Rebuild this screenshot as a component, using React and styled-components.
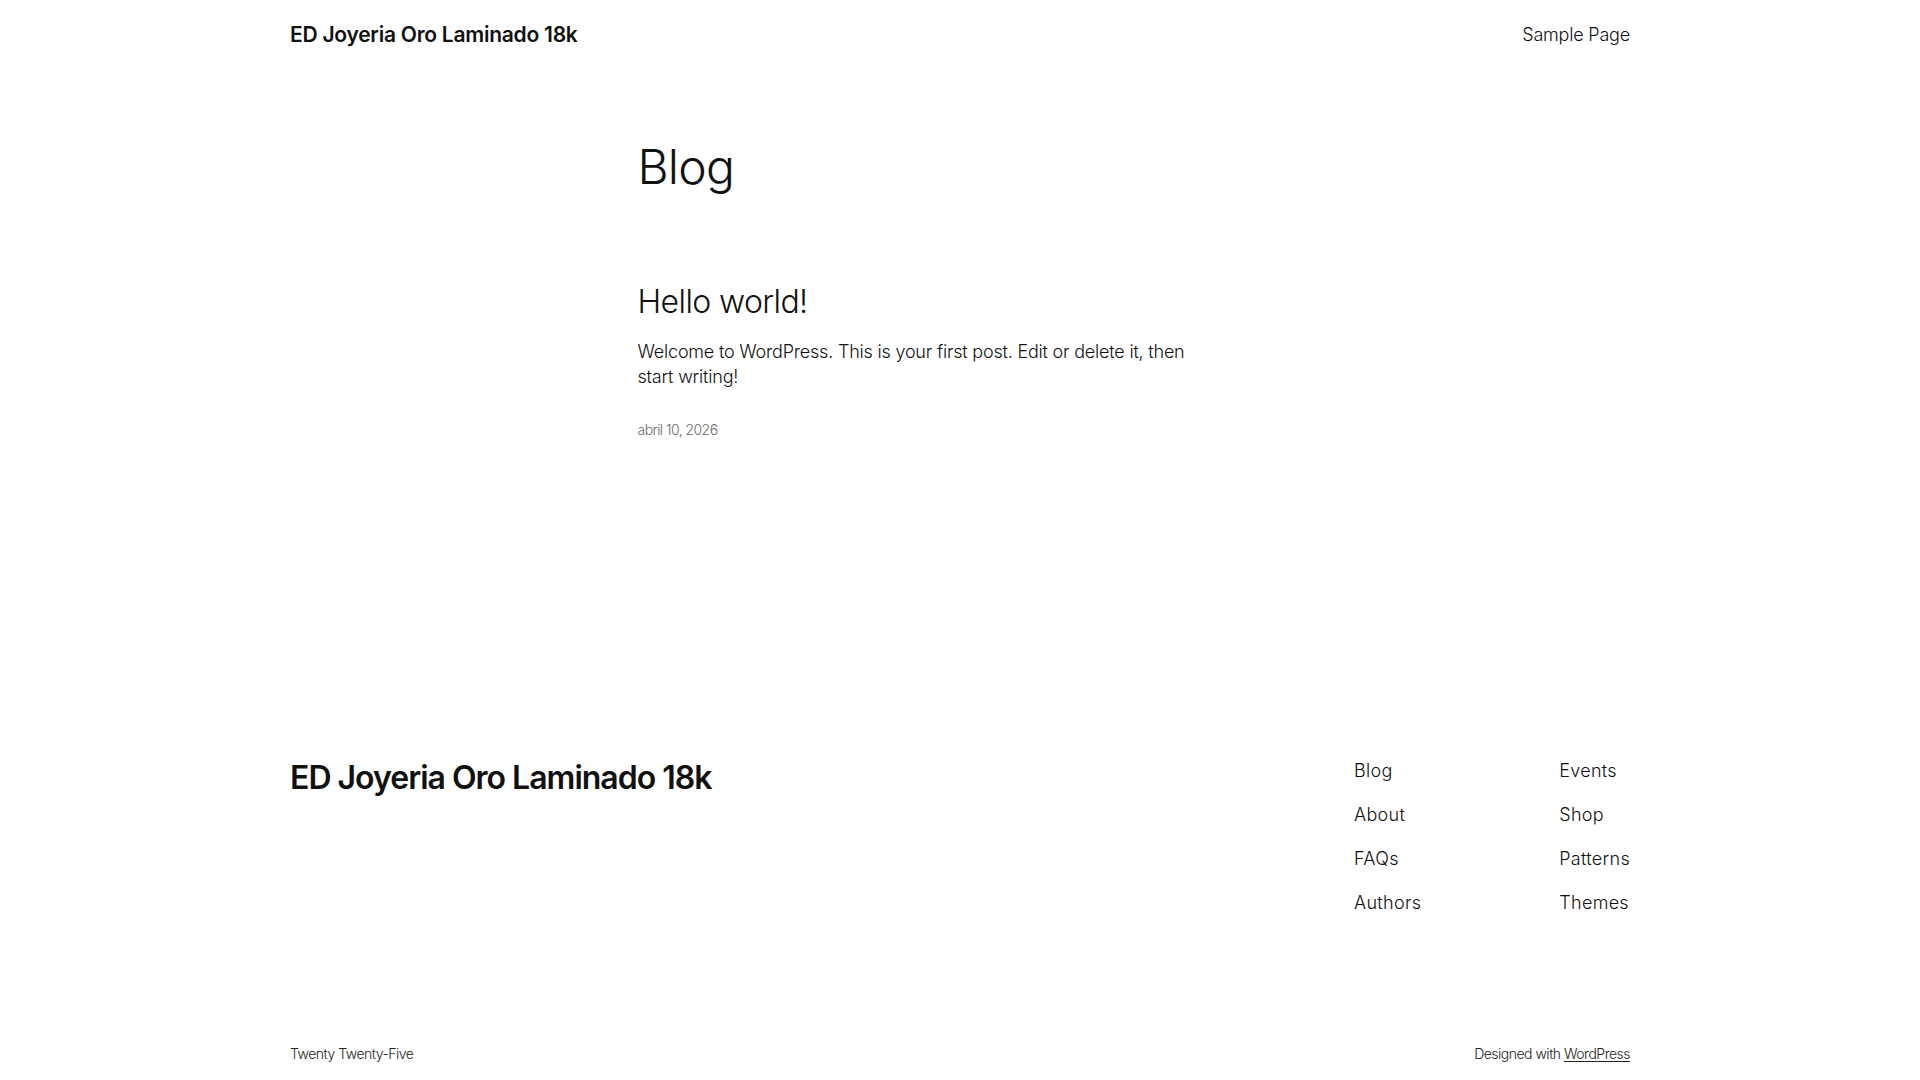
import React from "react";
import styled, { createGlobalStyle } from "styled-components";

const GlobalStyle = createGlobalStyle`
  html, body {
    margin: 0;
    padding: 0;
    background: #ffffff;
  }
  body {
    font-family: Inter, "Noto Sans", "Liberation Sans", sans-serif;
    color: #111111;
    -webkit-font-smoothing: antialiased;
  }
  a {
    color: inherit;
    text-decoration: none;
  }
`;

const Page = styled.div`
  width: 100%;
  height: 1080px;
  overflow: hidden;
  display: flex;
  flex-direction: column;
`;

const Wide = styled.div`
  width: 1340px;
  margin: 0 auto;
`;

const Header = styled(Wide)`
  height: 70px;
  display: flex;
  align-items: center;
  justify-content: space-between;
`;

const SiteTitle = styled.a`
  font-size: ${(p) => (p.$big ? "32px" : "21px")};
  font-weight: 600;
  letter-spacing: ${(p) => (p.$big ? "-1px" : "-0.25px")};
  line-height: 1.125;
  color: #111111;
`;

const NavLink = styled.a`
  font-size: 18px;
  font-weight: 300;
  line-height: 1.4;
  letter-spacing: ${(p) => (p.$loose ? "0.3px" : "-0.2px")};
  color: #111111;
`;

const Main = styled.main`
  width: 645px;
  margin: 0 auto;
  padding-top: 70px;
  display: flex;
  flex-direction: column;
`;

const PageTitle = styled.h1`
  margin: 0;
  font-size: 48px;
  font-weight: 300;
  line-height: 1.125;
  letter-spacing: -0.8px;
`;

const Post = styled.article`
  margin-top: 90px;
  display: flex;
  flex-direction: column;
`;

const PostTitle = styled.h2`
  margin: 0;
  font-size: 32px;
  font-weight: 300;
  line-height: 1.125;
  letter-spacing: -0.6px;
`;

const Excerpt = styled.p`
  margin: 19px 0 0;
  max-width: 570px;
  font-size: 18px;
  font-weight: 300;
  line-height: 1.4;
  letter-spacing: -0.2px;
`;

const PostDate = styled.time`
  margin-top: 31px;
  font-size: 14px;
  font-weight: 300;
  line-height: 1.4;
  letter-spacing: -0.55px;
  color: #6b6b6b;
`;

const Footer = styled.footer`
  margin-top: auto;
  padding-bottom: 16px;
`;

const FooterTop = styled(Wide)`
  display: flex;
  justify-content: space-between;
  align-items: flex-start;
`;

const FooterNav = styled.nav`
  display: flex;
  gap: 138px;
  margin-top: -2px;
`;

const NavColumn = styled.ul`
  list-style: none;
  margin: 0;
  padding: 0;
  display: flex;
  flex-direction: column;
  gap: 19px;
`;

const FooterBottom = styled(Wide)`
  margin-top: 129px;
  display: flex;
  justify-content: space-between;
  align-items: center;
`;

const Small = styled.p`
  margin: 0;
  font-size: 14px;
  font-weight: 300;
  line-height: 1.4;
  letter-spacing: -0.5px;
  color: #222222;

  a {
    text-decoration: underline;
    text-underline-offset: 2px;
  }
`;

const leftLinks = ["Blog", "About", "FAQs", "Authors"];
const rightLinks = ["Events", "Shop", "Patterns", "Themes"];

export default function App() {
  return (
    <Page>
      <GlobalStyle />
      <Header as="header">
        <SiteTitle href="#">ED Joyeria Oro Laminado 18k</SiteTitle>
        <NavLink href="#">Sample Page</NavLink>
      </Header>

      <Main>
        <PageTitle>Blog</PageTitle>
        <Post>
          <PostTitle>Hello world!</PostTitle>
          <Excerpt>
            Welcome to WordPress. This is your first post. Edit or delete it, then
            start writing!
          </Excerpt>
          <PostDate>abril 10, 2026</PostDate>
        </Post>
      </Main>

      <Footer>
        <FooterTop>
          <SiteTitle href="#" $big>
            ED Joyeria Oro Laminado 18k
          </SiteTitle>
          <FooterNav>
            <NavColumn>
              {leftLinks.map((l) => (
                <li key={l}>
                  <NavLink href="#" $loose>
                    {l}
                  </NavLink>
                </li>
              ))}
            </NavColumn>
            <NavColumn>
              {rightLinks.map((l) => (
                <li key={l}>
                  <NavLink href="#" $loose>
                    {l}
                  </NavLink>
                </li>
              ))}
            </NavColumn>
          </FooterNav>
        </FooterTop>
        <FooterBottom>
          <Small>Twenty Twenty-Five</Small>
          <Small>
            Designed with <a href="#">WordPress</a>
          </Small>
        </FooterBottom>
      </Footer>
    </Page>
  );
}
